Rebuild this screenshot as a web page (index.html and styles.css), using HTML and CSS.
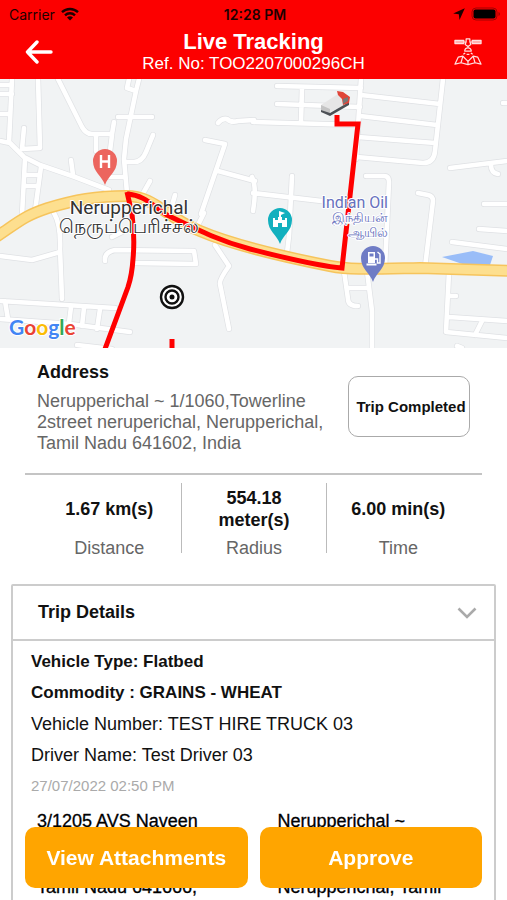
FILE: index.html
```html
<!DOCTYPE html>
<html lang="en">
<head>
    <meta charset="UTF-8">
    <meta name="viewport" content="width=device-width, initial-scale=1.0">
    <title>Live Tracking</title>
    <link rel="stylesheet" href="styles.css">
</head>
<body>
    <header class="top">
        <div class="status-bar">
            <span class="carrier">Carrier
                <svg width="18" height="14" viewBox="0 0 18 14" fill="none" stroke="#1c0000" stroke-width="2.4">
                    <path d="M1 5.2a11.6 11.6 0 0 1 16 0M4 8.3a7.3 7.3 0 0 1 10 0"/>
                    <path d="M9 13.6L6 10.6a4.4 4.4 0 0 1 6 0z" fill="#1c0000" stroke="none"/>
                </svg>
            </span>
            <span class="clock">12:28 PM</span>
            <span class="status-icons">
                <svg width="12" height="12" viewBox="0 0 12 12"><path d="M11.8.2L.2 5.6l5.6.7.7 5.6z" fill="#1c0000"/></svg>
                <svg width="30" height="14" viewBox="0 0 30 14">
                    <rect x="1" y="1" width="25" height="12" rx="4" fill="none" stroke="#a30000"/>
                    <rect x="2.5" y="2.5" width="22" height="9" rx="2" fill="#000"/>
                    <path d="M27.5 5v4q1.5-.5 1.5-2t-1.5-2z" fill="#a30000"/>
                </svg>
            </span>
        </div>
        <div class="nav-bar">
            <button class="icon-button" aria-label="Back">
                <svg width="28" height="24" viewBox="0 0 28 24" fill="none" stroke="#fff" stroke-width="3.4" stroke-linecap="round" stroke-linejoin="round">
                    <path d="M26 12H2.5M12 2L2.5 12L12 22"/>
                </svg>
            </button>
            <div class="heading">
                <h1>Live Tracking</h1>
                <p>Ref. No: TOO2207000296CH</p>
            </div>
            <button class="icon-button" aria-label="Satellite view">
                <svg width="28" height="30" viewBox="0 0 30 30" fill="none" stroke="#ffe0e0" stroke-width="1.3" stroke-linejoin="round">
                    <path d="M1 2.5h9.500v3.500h-9.500zM19.500 2.5h9.500v3.500h-9.500z" fill="#ffb0b0"/>
                    <path d="M10.5 4.3h2M17.5 4.3h2M13 1h4v3l1 3-3 2-3-2 1-3z"/>
                    <path d="M15 9v2M11.5 14a3.5 3.5 0 0 1 7 0zM12 16l-2 1.5M18 16l2 1.5M13.5 17.5h3"/>
                    <path d="M9.5 19.5l-5 1L1 28l6.5-1.5L15 28.5l7.5-2L29 28l-3.5-7.5-5-1L15 25z"/>
                    <path d="M9.5 19.5l-2 7M20.5 19.5l2 7M15 25v3.5"/>
                </svg>
            </button>
        </div>
    </header>

    <section class="map" aria-label="Route map">
        <svg viewBox="0 0 507 269">
            <defs>
                <g id="roads">
                    <path d="M12 0L9 63M0 6h12M0 15h12M0 35h10M0 62l10 2 14 14 16 8 35 12 34 13"/>
                    <path d="M24 49l-2 21 18-1L38 0M25 80l-3 56M41 88l-6 44M24 96h14M24 107h13M71 81l2 15"/>
                    <path d="M58 0l15 30 9 18q4 7 10 7h20l2-12M96 57v15M112 56l-2 16M110 98h15"/>
                    <path d="M129 0l-2 9 9 3 3-12M136 12l-10 48-2 20 3 34M118 38h34M153 56l-7 17q-4 10-12 10h-10M150 102l-9 16"/>
                    <path d="M218 44q4-5 9-4 4 4 11 2l16-1M205 61l20 4-24 70M218 92l37 10M204 134l-6 12M175 116l-4 14"/>
                    <path d="M277 7l84 2M302 8l-1 35M277 25l83 3M253 43l104 3M361 0l-5 80M361 16l79 9M360 37l77 9M358 58l77 6M443 0l-8 72q-1 12-12 12l-66-6"/>
                    <path d="M450 89l57-7M491 86q0 8 7 9M503 24h4M366 97h18q5 0 5 6l-4 85M292 97l-3 60-2 17M253 114l77 9M252 98q5 10 1 34"/>
                    <path d="M418 114l10 2q5 1 5 6l-8 66M484 125h23M479 150l28 2M452 163l55 7"/>
                    <path d="M0 177l32 4 28-8M54 134q7 12 6 36l2 50M0 222l115 7M0 240l70 5 60 8M71 228l-2 16M84 229l-2 18M100 230l-3 20M5 222l3 18M77 266l35 4"/>
                    <path d="M105 182q-1-9 10-11l79 1 2 13-61-1M112 158l10-5M215 166l14 21q-10 14-9 18l9 45"/>
                    <path d="M344 192l4 28q0 7 10 7M347 209h22M367 192l5 40v37M449 193l-3 60 61 6M449 217h7M449 238l58 4M482 242l-7 14M457 267l5 2"/>
                </g>
                <path id="highway" d="M-4 158C20 142 24 137 48 129C75 121 96 117 126 117C155 117 165 138 200 152C235 167 285 178 330 187C350 191 370 190 420 189L511 192"/>
            </defs>
            <rect width="507" height="269" fill="#f1f3f4"/>
            <path d="M442 178l31-6 20 5-4 12-18-1z" fill="#99bdf8"/>
            <g fill="none" stroke-linecap="round" stroke-linejoin="round">
                <use href="#roads" stroke="#dfe1e4" stroke-width="6"/>
                <use href="#roads" stroke="#fff" stroke-width="4.6"/>
                <use href="#highway" stroke="#f6c45c" stroke-width="12"/>
                <use href="#highway" stroke="#fddf8f" stroke-width="9"/>
            </g>
            <g fill="none" stroke="#f00" stroke-width="5">
                <path d="M337 36v9h21l-16 144C318 187 285 179 250 170C220 162 200 152 167 136C150 124 143 116 127 115"/>
                <path d="M127 113l5 22q3 24 1 45-1 16-5 28l-23 62M172 260v9"/>
            </g>

            <!-- truck -->
            <path d="M321 26l17-11 11 4v5l-19 9-9-4z" fill="#e6e6e6"/>
            <path d="M321 26l9 4v5l-9-4z" fill="#c4c4c4"/>
            <path d="M330 34l19-11v3l-19 11-9-4v-2z" fill="#4c5055"/>
            <path d="M337 12l6 1 7 5-1 6-6 2-1-6-4-4z" fill="#e04438"/>
            <path d="M343 20l5-2v4l-5 3z" fill="#777"/>

            <!-- hospital -->
            <path d="M105 106c-3-9-12-13-12-24a12 12 0 0 1 24 0c0 11-9 15-12 24z" fill="#ec655e"/>
            <path d="M101 76v13M109 76v13M101 82.5h8" stroke="#fff" stroke-width="2.4"/>
            <!-- landmark -->
            <path d="M280 165c-3-9-12-13-12-24a12 12 0 0 1 24 0c0 11-9 15-12 24z" fill="#12b0be"/>
            <path d="M273 148v-9h2v2h3v-3h1v-6l6 2-4 2v2h1v3h3v-2h2v9h-5v-4h-4v4z" fill="#fff"/>
            <!-- fuel -->
            <path d="M373 203c-3-9-12-13-12-24a12 12 0 0 1 24 0c0 11-9 15-12 24z" fill="#6f7cc5"/>
            <path d="M368 173h7v11h-7zM366.5 184.5h10v2h-10z" fill="#fff"/>
            <path d="M369.5 174.5h4v3h-4z" fill="#6f7cc5"/>
            <path d="M375 180h2.5v4h2.5v-9l-2.5-2" fill="none" stroke="#fff" stroke-width="1.4"/>
            <!-- current position -->
            <g fill="none" stroke="#111" stroke-width="2.4">
                <circle cx="172" cy="218" r="11" fill="#fff"/>
                <circle cx="172" cy="218" r="6.5"/>
                <circle cx="172" cy="218" r="2.5" fill="#111" stroke="none"/>
            </g>

            <g class="map-label place">
                <text x="129" y="135">Nerupperichal</text>
                <text x="129" y="154">நெருப்பெரிச்சல்</text>
            </g>
            <g class="map-label poi">
                <text x="388" y="129">Indian Oil</text>
                <text class="small" x="388" y="143">இந்தியன்</text>
                <text class="small" x="388" y="158">ஆயில்</text>
            </g>
            <text class="map-logo" x="9" y="256"><tspan fill="#4285f4">G</tspan><tspan fill="#ea4335">o</tspan><tspan fill="#fbbc05">o</tspan><tspan fill="#4285f4">g</tspan><tspan fill="#34a853">l</tspan><tspan fill="#ea4335">e</tspan></text>
        </svg>
    </section>

    <main>
        <section class="address">
            <div class="address-text">
                <h2>Address</h2>
                <p>Nerupperichal ~ 1/1060,Towerline 2street neruperichal, Nerupperichal, Tamil Nadu 641602, India</p>
            </div>
            <button class="trip-status">Trip Completed</button>
        </section>

        <dl class="stats">
            <div class="stat">
                <dd>1.67 km(s)</dd>
                <dt>Distance</dt>
            </div>
            <div class="stat">
                <dd>554.18 meter(s)</dd>
                <dt>Radius</dt>
            </div>
            <div class="stat">
                <dd>6.00 min(s)</dd>
                <dt>Time</dt>
            </div>
        </dl>

        <section class="trip">
            <button class="trip-toggle" aria-expanded="true">Trip Details
                <svg width="20" height="12" viewBox="0 0 20 12" fill="none" stroke="#aaa" stroke-width="2.6">
                    <path d="M1.5 1.5L10 10l8.5-8.5"/>
                </svg>
            </button>
            <div class="trip-body">
                <p class="strong">Vehicle Type: Flatbed</p>
                <p class="strong">Commodity : GRAINS - WHEAT</p>
                <p>Vehicle Number: TEST HIRE TRUCK 03</p>
                <p>Driver Name: Test Driver 03</p>
                <p class="date">27/07/2022 02:50 PM</p>
                <div class="stops">
                    <p>3/1205 AVS Naveen<br>Nagar, Tiruppur,<br>Tiruppur,<br>Tamil Nadu 641666,</p>
                    <p>Nerupperichal ~<br>1/1060,Towerline<br>2street neruperichal,<br>Nerupperichal, Tamil</p>
                </div>
            </div>
        </section>
    </main>

    <footer class="actions">
        <button>View Attachments</button>
        <button>Approve</button>
    </footer>
</body>
</html>
```
FILE: styles.css
```css
* {
    box-sizing: border-box;
}
body {
    margin: 0;
    font-family: "Liberation Sans", Arial, sans-serif;
    background-color: #fff;
    color: #111;
}
::-webkit-scrollbar {
    display: none;
}
h1, h2, p, dl, dd {
    margin: 0;
}
button {
    font-family: inherit;
    padding: 0;
    border: none;
    background: none;
    color: inherit;
}
svg {
    display: block;
}

/* header */
.top {
    background-color: #fc0000;
    padding-bottom: 3px;
}
.status-bar {
    display: grid;
    grid-template-columns: 1fr auto 1fr;
    align-items: center;
    height: 28px;
    padding: 0 6px 0 9px;
    font-family: Inter, sans-serif;
    font-size: 14px;
    color: #1c0000;
}
.carrier {
    display: flex;
    align-items: center;
    gap: 6px;
}
.clock {
    font-weight: 600;
}
.status-icons {
    display: flex;
    align-items: center;
    justify-content: flex-end;
    gap: 6px;
}
.nav-bar {
    display: flex;
    align-items: center;
    justify-content: space-between;
    height: 48px;
    padding: 0 25px;
    color: #fff;
}
.icon-button {
    display: flex;
    width: 28px;
}
.heading {
    text-align: center;
}
.heading h1 {
    font-size: 22px;
    line-height: 24px;
}
.heading p {
    font-size: 17px;
    line-height: 20px;
}

/* map */
.map svg {
    width: 100%;
    height: auto;
}
.map-label {
    stroke: #fff;
    stroke-width: 2px;
    paint-order: stroke;
    stroke-linejoin: round;
}
.place {
    font-family: Roboto, "Noto Sans", sans-serif;
    font-size: 19px;
    fill: #333;
    text-anchor: middle;
}
.poi {
    font-family: Roboto, "Noto Sans", sans-serif;
    font-size: 16px;
    fill: #6670bd;
    text-anchor: end;
}
.poi .small {
    font-size: 13px;
}
.map-logo {
    font-family: Lato, sans-serif;
    font-size: 21px;
    font-weight: bold;
    stroke: #fff;
    stroke-width: 2px;
    paint-order: stroke;
}

/* address */
.address {
    display: flex;
    align-items: flex-start;
    justify-content: space-between;
    margin: 0 25px;
    padding: 13px 12px 19px;
    border-bottom: 2px solid #c4c4c4;
}
.address-text {
    width: 300px;
}
.address h2 {
    font-size: 18px;
    line-height: 22px;
}
.address p {
    margin-top: 8px;
    font-size: 18px;
    line-height: 21px;
    color: #666;
}
.trip-status {
    flex: none;
    width: 122px;
    height: 61px;
    margin-top: 15px;
    padding-left: 4px;
    border: 1px solid #aaa;
    border-radius: 10px;
    font-size: 15px;
    font-weight: bold;
    white-space: nowrap;
}

/* distance, radius, time */
.stats {
    display: grid;
    grid-template-columns: 1fr 1fr 1fr;
    margin: 8px 37px 0;
}
.stat {
    display: flex;
    flex-direction: column;
    align-items: center;
    height: 70px;
    text-align: center;
}
.stat + .stat {
    border-left: 1px solid #bbb;
}
.stat dd {
    display: flex;
    flex: none;
    align-items: center;
    justify-content: center;
    width: 110px;
    height: 52px;
    font-size: 18px;
    line-height: 22px;
    font-weight: bold;
}
.stat dt {
    flex: none;
    font-size: 18px;
    line-height: 26px;
    color: #666;
}

/* trip details */
.trip {
    margin: 31px 11px 0;
    border: 2px solid #ccc;
    border-radius: 2px;
}
.trip-toggle {
    display: flex;
    align-items: center;
    justify-content: space-between;
    width: 100%;
    height: 55px;
    padding: 0 17px 0 25px;
    border-bottom: 2px solid #ccc;
    font-size: 18px;
    font-weight: bold;
}
.trip-body {
    padding: 9px 18px;
    font-size: 18px;
}
.trip-body p {
    line-height: 24px;
    margin-bottom: 7px;
}
.trip-body .strong {
    font-size: 17px;
    font-weight: bold;
}
.trip-body .date {
    font-size: 15px;
    color: #aaa;
}
.stops {
    display: grid;
    grid-template-columns: 1fr 1fr;
    gap: 42px;
    padding: 5px 0 0 6px;
}
.stops p {
    font-size: 18px;
    line-height: 22px;
    color: #000;
    -webkit-text-stroke: 0.3px #000;
    white-space: nowrap;
}

/* bottom buttons float over the scrolling page */
.actions {
    position: fixed;
    left: 0;
    right: 0;
    bottom: 12px;
    display: flex;
    gap: 12px;
    padding: 0 25px;
}
.actions button {
    flex: 1;
    height: 61px;
    border-radius: 10px;
    background-color: #ffa500;
    color: #fff;
    font-size: 21px;
    font-weight: bold;
}
```
